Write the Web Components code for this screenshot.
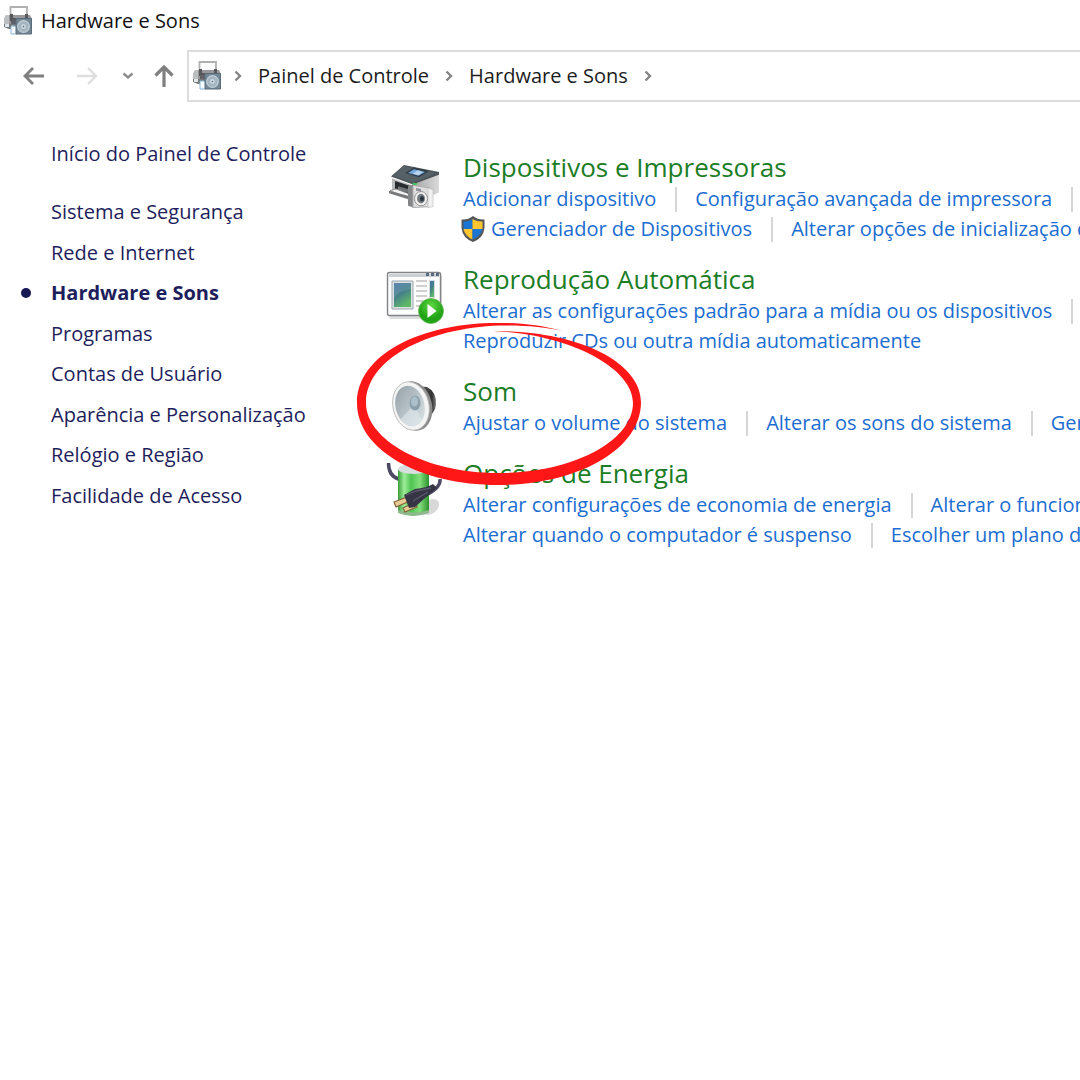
<!DOCTYPE html>
<html lang="pt-BR">
<head>
<meta charset="utf-8">
<title>Hardware e Sons</title>
<style>
html,body{margin:0;background:#fff}
body{font:20px/30px "Open Sans","Noto Sans",sans-serif}
</style>
</head>
<body>
<control-panel></control-panel>
<script>
const define=(name,html,setup)=>{
  const tpl=document.createElement('template');
  tpl.innerHTML=html;
  customElements.define(name,class extends HTMLElement{
    connectedCallback(){
      if(this.shadowRoot)return;
      this.attachShadow({mode:'open'}).append(tpl.content.cloneNode(true));
      if(setup)setup(this,this.shadowRoot);
    }
  });
};

const icons={
hardware:`<svg viewBox="0 0 30 32" width="30" height="32"><path d="M7.500 12V2h16.500V12" fill="#fff" stroke="#b0b0b0" stroke-width="1.800"/><path d="M3 10h24l2 4v8H1v-8z" fill="#98989b"/><path d="M3 10h3v9H1v-5z" fill="#bdbec0"/><path d="M7 9h3v4h12V9h3v7H7z" fill="#56575b"/><path d="M8 15h5v6H8z" fill="#606166"/><path d="M1 19h12v5H6l-5-2z" fill="#777"/><path d="M2 19h4v3H2z" fill="#dfe8ed"/><path d="M8 21h6v8H8z" fill="#f5fbff" stroke="#85b7dc"/><path d="M13 13.500h15.500V29H13z" fill="#728694" stroke="#5a6c7a"/><circle cx="20.500" cy="21.500" r="5.800" fill="#a4b5c0" stroke="#c2d0d9" stroke-width="1.200"/><circle cx="20.500" cy="21.500" r="2.200" fill="#dce6ec"/><circle cx="20.500" cy="21.500" r="1" fill="#63798a"/></svg>`,
printer:`<svg viewBox="0 0 54 54" width="54" height="48" preserveAspectRatio="none"><defs><linearGradient id="p"><stop stop-color="#a4a4a4"/><stop offset="1" stop-color="#dadada"/></linearGradient></defs><path d="m4 16 20 8v15L4 31z" fill="#b9babb"/><path d="M25 23 51 12v20L31 41l-6-2z" fill="url(#p)"/><path d="m3 14 2-2L16 1l35 8v3L25 23z" fill="#4b5359"/><path d="M4 13 16 2l33 8-24 11z" fill="#566067"/><path d="m17 10 9-6 15 4-10 7z" fill="#303d49"/><path d="m20 10 6-4 11 3-6 4z" fill="#77aade"/><path d="m25 11 5-4 5 2-5 4z" fill="#b6d4ee"/><path d="m7 19 16 6v11L7 30z" fill="#292c2f"/><path d="m10 25 12 4v4l-12-4z" fill="#717578"/><path d="m2 30 6-2 14 6v5z" fill="#f3f3f3" stroke="#8a8b8c"/><path d="m1 30 20 6v4L1 33z" fill="#77797b"/><path d="m25 21 5 1-2 2-4-1z" fill="#42c558"/><path d="m20 25 5-2v26l-5-2z" fill="#858687"/><path d="m25 24 17 3v21l-17 1z" fill="#dedede" stroke="#aaa"/><path d="m40 27 5 2v19l-5 1z" fill="#f0f0f0" stroke="#b9b9b9" stroke-width=".6"/><ellipse cx="33" cy="39" rx="6.500" ry="8" fill="#f3f3f3" stroke="#8c8c8c"/><ellipse cx="33" cy="39" rx="4" ry="5.500" fill="#747c82"/><ellipse cx="34" cy="39" rx="2" ry="3" fill="#29333e"/><path d="m28 27 5 1v3l-5-1z" fill="#8c9298"/></svg>`,
autoplay:`<svg viewBox="0 0 60 54" width="60" height="54"><defs><linearGradient id="b" x1="0" y1="0" x2=".5" y2="1"><stop stop-color="#4274a6"/><stop offset=".5" stop-color="#447f8a"/><stop offset="1" stop-color="#5eb767"/></linearGradient><radialGradient id="g" cx=".5" cy=".3"><stop stop-color="#5fd842"/><stop offset="1" stop-color="#20a316"/></radialGradient></defs><rect x="4" y="4" width="53" height="45" rx="2" fill="#ddd"/><rect x="2.500" y="2.500" width="53" height="43" rx="2" fill="#fcfcfc" stroke="#818386" stroke-width="1.400"/><path d="M4 4h50v3H4z" fill="#cbd0d5"/><path d="M41 3h3v3h-3zm5 0h3v3h-3zm5 0h3v3h-3z" fill="#586a81"/><path d="M7 11h21v28H7z" fill="#dce2e4" stroke="#9ba8ae"/><path d="M9 13h17v24H9z" fill="url(#b)"/><path d="M9 28q6-8 17-9v-6H9z" fill="#fff" opacity=".12"/><path d="M31 11h11M31 16h11M31 21h11M31 26h11M31 31h7M31 36h4" stroke="#c0c0c0" stroke-width="1.500"/><path d="M44 10h6v18h-6z" fill="#d7dcdf"/><path d="M45 11h4v16h-4z" fill="url(#b)"/><circle cx="46" cy="41" r="12.500" fill="url(#g)" stroke="#68b759" stroke-width=".8"/><path d="m42.500 34 9 7-9 7z" fill="#fff"/></svg>`,
sound:`<svg viewBox="0 0 48 54" width="48" height="54"><defs><linearGradient id="s"><stop stop-color="#858585"/><stop offset=".5" stop-color="#4d4d4d"/><stop offset=".8" stop-color="#303030"/><stop offset="1" stop-color="#858585"/></linearGradient><linearGradient id="c" x1="0" y1="0" x2=".7" y2="1"><stop stop-color="#929fa5"/><stop offset=".5" stop-color="#b3bec4"/><stop offset="1" stop-color="#d4dee2"/></linearGradient></defs><path d="M24 6 36 7q10 5 9 18-1 9-10 12l-8 6z" fill="url(#s)"/><ellipse cx="23" cy="26" rx="18" ry="25" transform="rotate(-13 23 26)" fill="#8c8c8c"/><ellipse cx="20" cy="26" rx="18" ry="24.500" transform="rotate(-13 20 26)" fill="#f4f4f4" stroke="#b4b4b4" stroke-width=".8"/><ellipse cx="19" cy="26" rx="14.500" ry="20.500" transform="rotate(-13 19 26)" fill="url(#c)"/><path d="M23 25 9 40q13 12 22 0z" fill="#e0e9ec" opacity=".6"/><ellipse cx="24" cy="23" rx="5.500" ry="7.500" fill="#8ba0ab"/><ellipse cx="23.500" cy="21.500" rx="3.500" ry="5" fill="#abc0ca"/></svg>`,
power:`<svg viewBox="0 0 58 58" width="58" height="58"><defs><linearGradient id="e"><stop stop-color="#3b9c3b"/><stop offset=".2" stop-color="#9dee98"/><stop offset=".42" stop-color="#50c453"/><stop offset=".7" stop-color="#83df7c"/><stop offset="1" stop-color="#2c922e"/></linearGradient></defs><ellipse cx="44" cy="47" rx="10" ry="7" transform="rotate(-35 44 47)" fill="#d8d8d8"/><path d="M2.500 3q0 13 10 16M54 19q1 8-12 15" fill="none" stroke="#4b4964" stroke-width="3.500"/><path d="M12 9v43q15 7 31 0V9z" fill="url(#e)"/><path d="M12 50v3q15 6 31 0v-3q-15 5-31 0" fill="#8fb98d"/><ellipse cx="27.500" cy="9" rx="15.500" ry="5" fill="#d9dfe1"/><path d="m8 42 13-5 3 4-14 6zM17 48l12-6 2 5-12 5z" fill="#e8cb94" stroke="#80633b" stroke-width="1.200"/><path d="m18 35 11-6q12-1 18-5l4 4-13 11-9 8-6 1z" fill="#353545"/><path d="m20 35 10-4 15-3M27 41l15-9" fill="none" stroke="#5a5a6c" stroke-width="1.300"/></svg>`,
shield:`<svg viewBox="0 0 26 28" width="26" height="28"><path d="M13 1Q8 5 1.500 4.500V13q1 10 11.500 14 10.500-4 11.500-14V4.500Q18 5 13 1" fill="#54585a"/><path d="M12.500 4Q8 7 3.500 6.500V14H12.500z" fill="#1b75d2"/><path d="M12.500 4q5 3 10 2.500V14h-10z" fill="#ffc52f"/><path d="M3.500 14H12.500v10.500Q5 21 3.500 14" fill="#ffc52f"/><path d="M12.500 14h10Q21 21 12.500 24.500z" fill="#1b75d2"/></svg>`,
back:`<svg viewBox="0 0 22 20" width="22" height="20"><path d="M21 10H2M10 2 2 10l8 8" fill="none" stroke="#7f7f7f" stroke-width="2.800"/></svg>`,
forward:`<svg viewBox="0 0 22 20" width="22" height="20"><path d="M1 10h19M12 2l8 8-8 8" fill="none" stroke="#dedede" stroke-width="2.400"/></svg>`,
down:`<svg viewBox="0 0 12 8" width="12" height="8"><path d="m1.500 1.500 4.500 4 4.500-4" fill="none" stroke="#8b8b8b" stroke-width="2.400"/></svg>`,
up:`<svg viewBox="0 0 20 22" width="20" height="22"><path d="M10 22V2M1.500 10.500 10 2l8.500 8.500" fill="none" stroke="#7f7f7f" stroke-width="3.200"/></svg>`,
chevron:`<svg viewBox="0 0 8 12" width="8" height="12"><path d="m1.500 1.500 4.500 4.500-4.500 4.500" fill="none" stroke="#858585" stroke-width="2.400"/></svg>`
};

define('cp-icon',`<style>:host{display:inline-flex;flex:none}svg{display:block}</style>`,(el,root)=>{
  root.append(document.createRange().createContextualFragment(icons[el.getAttribute('name')]));
});

define('title-bar',`<style>
:host{display:flex;align-items:center;gap:8px;height:42px;padding-left:3px;color:#111}
h1{margin:0;font:inherit}
</style><cp-icon name="hardware"></cp-icon><h1><slot></slot></h1>`);

define('address-bar',`<style>
:host{display:flex;align-items:center;padding-top:8px;color:#1c1c1c}
nav{display:flex;align-items:center;width:187px;flex:none;box-sizing:border-box;padding-left:23px}
button{display:flex;padding:0;margin:0;border:0;background:none}
.fwd{margin-left:31px}.hist{margin-left:24px}.up{margin-left:20px}
ol{display:flex;align-items:center;flex:1;height:48px;margin:0;padding:0 0 0 3px;list-style:none;border:2px solid #dcdcdc;border-right:0}
li{display:flex;align-items:center;white-space:nowrap}
a{color:inherit;text-decoration:none;margin:0 16px}
li:first-child cp-icon:first-child{margin-right:12px}
</style>
<nav aria-label="Navegação">
<button aria-label="Voltar"><cp-icon name="back"></cp-icon></button>
<button class="fwd" aria-label="Avançar"><cp-icon name="forward"></cp-icon></button>
<button class="hist" aria-label="Locais recentes"><cp-icon name="down"></cp-icon></button>
<button class="up" aria-label="Acima"><cp-icon name="up"></cp-icon></button>
</nav>
<ol><li><cp-icon name="hardware"></cp-icon><cp-icon name="chevron"></cp-icon></li>
<li><a href="#painel">Painel de Controle</a><cp-icon name="chevron"></cp-icon></li>
<li><a href="#hardware">Hardware e Sons</a><cp-icon name="chevron"></cp-icon></li></ol>`);

define('side-link',`<style>
:host{display:flex;align-items:center;color:#1e1e5c;line-height:28px;white-space:nowrap}
i{width:10px;height:10px;margin:0 20px 0 21px;border-radius:50%;flex:none}
a{color:inherit;text-decoration:none}
:host([current]) i{background:#151853}
:host([current]) a{font-weight:700}
</style><i></i><a href="#categoria"><slot></slot></a>`);

define('side-nav',`<style>
:host{display:block;width:386px;flex:none}
nav{display:flex;flex-direction:column;justify-content:space-between;min-height:312px;margin-top:30px}
</style><slot name="home"></slot><nav aria-label="Categorias"><slot></slot></nav>`);

define('task-link',`<style>
:host{display:flex;align-items:center}
:host(:not(:last-child))::after{content:"";width:2px;height:25px;margin:0 18px 0 19px;background:#d6d6d6}
cp-icon{margin:0 5px 0 -3px}
a{color:#1b6dd1;text-decoration:none}
</style><a href="#tarefa"><slot></slot></a>`,(el,root)=>{
  if(el.hasAttribute('shield')){
    const icon=document.createElement('cp-icon');
    icon.setAttribute('name','shield');
    root.querySelector('a').before(icon);
  }
});

define('task-row',`<style>:host{display:flex;height:30px;white-space:nowrap}</style><slot></slot>`);

define('task-category',`<style>
:host{display:flex}
.pic{width:57px;margin-right:20px;flex:none;display:flex;justify-content:center;align-items:flex-start}
.body{min-width:0;flex:1}
h2{margin:0;font-size:26px;line-height:34px;font-weight:400;white-space:nowrap}
h2 a{color:#1b7d25;text-decoration:none}
.pic cp-icon{margin-top:14px}
:host([icon=power]) .pic cp-icon{margin-top:4px}
:host([icon=autoplay]) .pic cp-icon{margin-top:8px}
:host([icon=sound]) .pic cp-icon{margin-top:6px}
</style><div class="pic"></div><div class="body"><h2><a href="#categoria"><slot name="title"></slot></a></h2><slot></slot></div>`,(el,root)=>{
  const icon=document.createElement('cp-icon');
  icon.setAttribute('name',el.getAttribute('icon'));
  root.querySelector('.pic').append(icon);
});

define('marker-ring',`<style>:host{position:absolute;left:-30px;top:172px;pointer-events:none}svg{display:block}</style>
<svg viewBox="356 322 286 164" width="286" height="164"><path d="M563 331C540 325 520 322.500 497 323C420 323 357 355 357 403C357 450 420 485 498 485C577 485 641 450 641 402C641 365 585 331 493 331C570 334 633 368 633 403C633 440 575 473 498 473C425 473 366 440 366 403C366 360 425 328 500 325.500C525 325 545 327 563 331Z" fill="#ff1616"/></svg>`);

define('control-panel',`<style>
:host{display:block;overflow-x:clip}
main{display:flex;padding-top:38px}
.tasks{position:relative;display:flex;flex-direction:column;gap:18px;flex:1;min-width:0;margin-top:10px}
</style>
<title-bar>Hardware e Sons</title-bar>
<address-bar></address-bar>
<main>
<side-nav>
<side-link slot="home">Início do Painel de Controle</side-link>
<side-link>Sistema e Segurança</side-link>
<side-link>Rede e Internet</side-link>
<side-link current>Hardware e Sons</side-link>
<side-link>Programas</side-link>
<side-link>Contas de Usuário</side-link>
<side-link>Aparência e Personalização</side-link>
<side-link>Relógio e Região</side-link>
<side-link>Facilidade de Acesso</side-link>
</side-nav>
<div class="tasks">
<task-category icon="printer"><span slot="title">Dispositivos e Impressoras</span>
<task-row><task-link>Adicionar dispositivo</task-link><task-link>Configuração avançada de impressora</task-link><span></span></task-row>
<task-row><task-link shield>Gerenciador de Dispositivos</task-link><task-link>Alterar opções de inicialização do</task-link></task-row>
</task-category>
<task-category icon="autoplay"><span slot="title">Reprodução Automática</span>
<task-row><task-link>Alterar as configurações padrão para a mídia ou os dispositivos</task-link><span></span></task-row>
<task-row><task-link>Reproduzir CDs ou outra mídia automaticamente</task-link></task-row>
</task-category>
<task-category icon="sound"><span slot="title">Som</span>
<task-row><task-link>Ajustar o volume do sistema</task-link><task-link>Alterar os sons do sistema</task-link><task-link>Gerenciar</task-link></task-row>
</task-category>
<task-category icon="power"><span slot="title">Opções de Energia</span>
<task-row><task-link>Alterar configurações de economia de energia</task-link><task-link>Alterar o funcionamento</task-link></task-row>
<task-row><task-link>Alterar quando o computador é suspenso</task-link><task-link>Escolher um plano de</task-link></task-row>
</task-category>
<marker-ring></marker-ring>
</div>
</main>`);
</script>
</body>
</html>
